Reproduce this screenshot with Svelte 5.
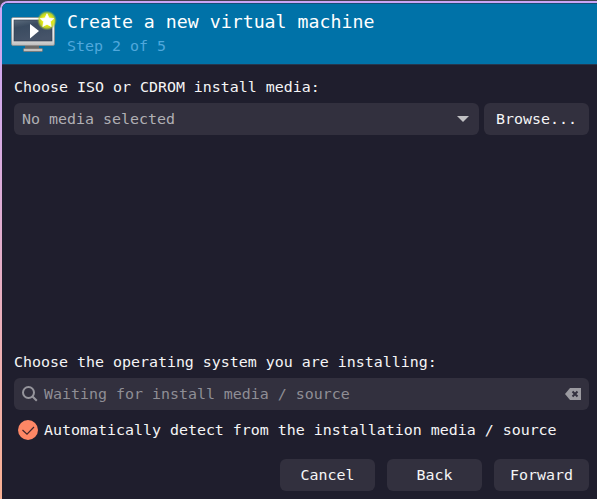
<script>
  let detect = $state(true);
  const actions = ['Cancel', 'Back', 'Forward'];
</script>

<div class="frame">
  <main class="window">
    <header>
      <svg class="logo" width="48" height="46" viewBox="0 0 48 46" aria-hidden="true">
        <defs>
          <linearGradient id="bezel" x1="0" y1="0" x2="0" y2="1">
            <stop offset="0" stop-color="#ffffff" />
            <stop offset="0.8" stop-color="#dcdcdc" />
            <stop offset="1" stop-color="#bcbcbc" />
          </linearGradient>
          <linearGradient id="screen" x1="0" y1="0" x2="0.35" y2="1">
            <stop offset="0" stop-color="#5b6b7c" />
            <stop offset="0.35" stop-color="#3a4b60" />
            <stop offset="1" stop-color="#465469" />
          </linearGradient>
          <radialGradient id="glow">
            <stop offset="0.5" stop-color="#e3ea10" />
            <stop offset="0.75" stop-color="#d0de1c" stop-opacity="0.85" />
            <stop offset="1" stop-color="#8bb54a" stop-opacity="0" />
          </radialGradient>
        </defs>
        <path d="M15 35h14v4H15z" fill="#6b6967" />
        <rect x="13.5" y="38.5" width="19" height="3" rx="0.8" fill="#c3c1bf" stroke="#77736f" stroke-width="0.8" />
        <rect x="1.5" y="7.5" width="43" height="28" rx="1.5" fill="url(#bezel)" stroke="#8d8a87" stroke-width="0.7" />
        <rect x="4" y="10" width="38" height="21" fill="url(#screen)" stroke="#303b4a" stroke-width="0.6" />
        <path d="M20 14l9 7-9 7.5z" fill="#fff" />
        <circle cx="37" cy="10.5" r="10" fill="url(#glow)" />
        <path d="M37 3.7l2 4.3 4.7.6-3.4 3.2.9 4.7-4.2-2.3-4.2 2.3.9-4.7-3.4-3.2L35 8z" fill="#fff" stroke="#fff" stroke-width=".8" stroke-linejoin="round" />
      </svg>
      <div class="heading">
        <h1>Create a new virtual machine</h1>
        <p>Step 2 of 5</p>
      </div>
    </header>

    <section class="media">
      <h2>Choose ISO or CDROM install media:</h2>
      <div class="row">
        <div class="field combo">
          <span>No media selected</span>
          <svg width="12" height="6" viewBox="0 0 12 6"><path d="M0 0h12L6 6z" fill="#c0c0c3" /></svg>
        </div>
        <button class="browse">Browse...</button>
      </div>
    </section>

    <section class="system">
      <h2>Choose the operating system you are installing:</h2>
      <div class="field search">
        <svg width="16" height="16" viewBox="0 0 16 16" fill="none" stroke="#96959c" stroke-width="2">
          <circle cx="6.5" cy="6.5" r="5.5" /><path d="M10.5 10.5l4.3 4.3" />
        </svg>
        <span>Waiting for install media / source</span>
        <svg class="clear" width="16" height="12" viewBox="0 0 16 12">
          <path d="M5 0h11v12H5L0 6z" fill="#9b9aa0" />
          <path d="M7.5 3.5l5 5m0-5l-5 5" stroke="#32303e" stroke-width="2" />
        </svg>
      </div>
      <button class="detect" role="checkbox" aria-checked={detect} onclick={() => (detect = !detect)}>
        <svg width="20" height="20" viewBox="0 0 20 20">
          <circle cx="10" cy="10" r="10" fill="#fe8765" />
          {#if detect}<path d="M4.5 10l4.5 4.2 7-7.2" fill="none" stroke="#42262b" stroke-width="1.2" />{/if}
        </svg>
        <span>Automatically detect from the installation media / source</span>
      </button>
    </section>

    <footer>
      {#each actions as action}
        <button>{action}</button>
      {/each}
    </footer>
  </main>
</div>

<style>
  :global(body) { margin: 0; background: #43414f; }
  .frame {
    box-sizing: border-box;
    height: 499px;
    padding: 2px 0 0 2px;
    border-top: 1px solid #43414f;
    border-radius: 8px 0 0 0;
    background: linear-gradient(180deg, #cba6f7 0%, #d5abe6 25%, #efb0b2 72%, #fab092 100%);
    overflow: hidden;
    font: 14.95px/20px "DejaVu Sans Mono", monospace;
    color: #f5f5f6;
  }
  .window {
    display: flex;
    flex-direction: column;
    box-sizing: border-box;
    height: 496px;
    background: #1f1e2d;
    border-radius: 6px 0 0 0;
    overflow: hidden;
  }
  header {
    display: flex;
    box-sizing: border-box;
    height: 62px;
    padding: 6px 0 0 8px;
    background: #0072a8;
    border-top: 1px solid #164f75;
    border-bottom: 1px solid #25374e;
    white-space: nowrap;
  }
  .heading { padding: 0 0 0 9px; }
  h1, h2, p { margin: 0; font-weight: 400; }
  h1 { font-size: 18.24px; line-height: 24px; color: #fff; }
  p { margin-top: 2px; color: #50a8dc; }
  h2 { font-size: inherit; white-space: nowrap; }
  .media { padding: 12px 8px 0 12px; }
  .row { display: flex; gap: 5px; margin-top: 6px; }
  .field {
    display: flex;
    align-items: center;
    box-sizing: border-box;
    height: 32px;
    padding: 0 8px;
    border-radius: 6px;
    background: #32303e;
    white-space: nowrap;
  }
  .combo { flex: 1; justify-content: space-between; padding-right: 10px; color: #b0afb4; }
  button {
    height: 32px;
    padding: 0;
    border: 0;
    border-radius: 6px;
    background: #32303e;
    color: inherit;
    font: inherit;
  }
  .browse { width: 105px; }
  .system { margin-top: auto; padding: 0 8px 0 12px; }
  .search { margin-top: 6px; gap: 6px; color: #8f8e95; }
  .clear { margin-left: auto; }
  .detect {
    display: flex;
    align-items: center;
    gap: 6px;
    height: 20px;
    margin: 10px 0 0 4px;
    background: none;
    white-space: nowrap;
  }
  footer {
    display: flex;
    justify-content: flex-end;
    gap: 12px;
    padding: 19px 8px 8px;
  }
  footer button { width: 95px; }
</style>
